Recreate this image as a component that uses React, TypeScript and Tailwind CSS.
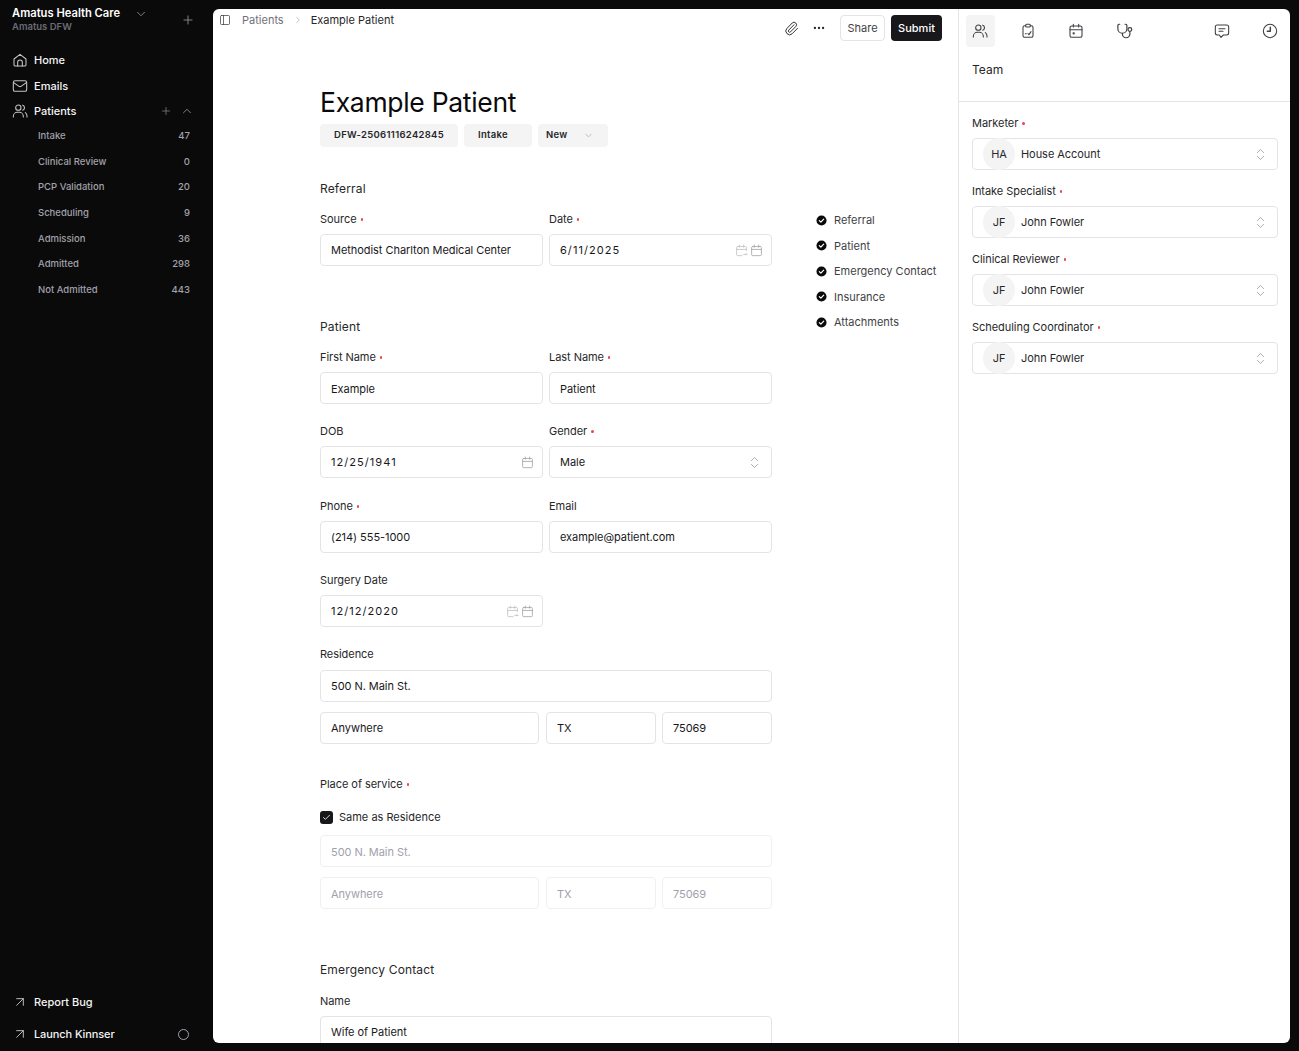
import React from "react";
import { ChevronDown, ChevronUp, ChevronRight, ChevronsUpDown, Plus, ArrowUpRight, Paperclip, MoreHorizontal, PanelLeft, Check } from "lucide-react";

type IP = { className?: string };
const S = ({ className, children }: IP & { children: React.ReactNode }) => (
  <svg viewBox="0 0 24 24" fill="none" stroke="currentColor" strokeWidth="1.6" strokeLinecap="round" strokeLinejoin="round" className={className}>{children}</svg>
);
const HomeI = (p: IP) => <S {...p}><path d="M3 10.5 12 3.5l9 7V19a2 2 0 0 1-2 2H5a2 2 0 0 1-2-2z" /><path d="M8.5 21v-5.5a3.5 3.5 0 0 1 7 0V21" /></S>;
const MailI = (p: IP) => <S {...p}><rect x="2" y="4" width="20" height="16" rx="2.5" /><path d="m2.5 7 8 5.5a2.8 2.8 0 0 0 3 0l8-5.5" /></S>;
const UsersI = (p: IP) => <S {...p}><circle cx="9.5" cy="7" r="4" /><path d="M2 21v-1a6 6 0 0 1 6-6h3a6 6 0 0 1 6 6v1" /><path d="M16 3.2a4 4 0 0 1 0 7.6" /><path d="M20 14.5a6 6 0 0 1 2.5 5V21" /></S>;
const ClipI = (p: IP) => <S {...p}><rect x="8.5" y="2" width="7" height="4" rx="1.5" /><path d="M8.5 4H7a2.5 2.5 0 0 0-2.5 2.5V19A2.5 2.5 0 0 0 7 21.5h10a2.5 2.5 0 0 0 2.5-2.5V6.500A2.500 2.500 0 0 0 17 4h-1.500" /><path d="M8 16h1.500M12 16l1.500 1.500L16.500 13" /></S>;
const CalFillI = (p: IP) => <S {...p}><rect x="3" y="4.500" width="18" height="17" rx="2.500" /><path d="M3 10h18M8 2v4M16 2v4" /><rect x="7" y="14" width="3" height="3" fill="currentColor" stroke="none" /></S>;
const StethI = (p: IP) => <S {...p}><path d="M5 3H4a1.500 1.500 0 0 0-1.500 1.500V9a6 6 0 0 0 12 0V4.500A1.500 1.500 0 0 0 13 3h-1" /><path d="M8.500 15v1a5 5 0 0 0 10 0v-3" /><circle cx="18.500" cy="10" r="2.500" /></S>;
const ChatI = (p: IP) => <S {...p}><path d="M5 3h14a3 3 0 0 1 3 3v9a3 3 0 0 1-3 3h-5l-3.500 3.500L8 18H5a3 3 0 0 1-3-3V6a3 3 0 0 1 3-3z" /><path d="M7.500 8.500h9M7.500 12.500h6" /></S>;
const ClockI = (p: IP) => <S {...p}><circle cx="12" cy="12" r="10" /><path d="M12.500 6.500V12.500H8" strokeWidth="2.200" /></S>;
const CalI = (p: IP) => <S {...p}><rect x="3" y="4.500" width="18" height="17" rx="2" /><path d="M3 10h18M8 2v4M16 2v4" /></S>;
const CalRepeatI = (p: IP) => <S {...p}><path d="M21 12V6.500a2 2 0 0 0-2-2H5a2 2 0 0 0-2 2V19.500a2 2 0 0 0 2 2h8" /><path d="M3 10h18M8 2v4M16 2v4" /><path d="M16 19.500h6M19.500 17l2.500 2.500" /></S>;
const Done = ({ className }: IP) => (
  <svg viewBox="0 0 12 12" className={className}><circle cx="6" cy="6" r="5.500" fill="#0a0a0a" /><path d="m3.600 6.200 1.700 1.600 3.100-3.300" stroke="#fff" strokeWidth="1.300" fill="none" strokeLinecap="round" strokeLinejoin="round" /></svg>
);

const Req = () => <span className="ml-[4px] inline-block w-[2.500px] h-[2.500px] rounded-full bg-[#e5484d] align-middle" />;

const Label = ({ t, req, className = "" }: { t: string; req?: boolean; className?: string }) => (
  <div className={`h-[15px] leading-[15px] text-[11px] text-[#27272a] tracking-[-0.05px] flex items-center ${className}`}>{t}{req && <Req />}</div>
);

const Box = ({ children, className = "", muted }: { children?: React.ReactNode; className?: string; muted?: boolean }) => (
  <div className={`h-[32px] rounded-[4px] border ${muted ? "border-[#f0f0f1] text-[#a1a1aa]" : "border-[#e4e4e7] text-[#18181b]"} flex items-center px-[10px] text-[11px] tracking-[-0.05px] bg-white min-w-0 ${className}`}>{children}</div>
);

const DateBox = ({ v, repeat }: { v: string; repeat?: boolean }) => (
  <Box className="pr-[8px]">
    <span className="flex-1 tracking-[1.05px]">{v}</span>
    {repeat && <CalRepeatI className="w-[13px] h-[13px] text-[#c4c4c8] mr-[2px]" />}
    <CalI className="w-[13px] h-[13px] text-[#a8a8ad]" />
  </Box>
);

const F = ({ label, req, children }: { label: string; req?: boolean; children: React.ReactNode }) => (
  <div className="flex flex-col gap-[7px] min-w-0"><Label t={label} req={req} />{children}</div>
);

const subs: [string, string][] = [["Intake", "47"], ["Clinical Review", "0"], ["PCP Validation", "20"], ["Scheduling", "9"], ["Admission", "36"], ["Admitted", "298"], ["Not Admitted", "443"]];

const NavRow = ({ icon, t, className = "", children }: { icon: React.ReactNode; t: string; className?: string; children?: React.ReactNode }) => (
  <div className={`flex items-center h-[16px] pl-[12px] pr-[20px] text-[11px] font-medium text-[#f4f4f5] ${className}`}>
    <span className="w-[22px] flex">{icon}</span><span className="flex-1">{t}</span>{children}
  </div>
);

const Sidebar = () => (
  <aside className="w-[213px] shrink-0 h-full flex flex-col text-white">
    <div className="flex h-[33px] pt-[7px] pl-[12px] pr-[18px]">
      <div className="flex-1">
        <div className="flex items-center h-[13px] text-[11.200px] font-semibold leading-[13px]">Amatus Health Care<ChevronDown className="w-[14px] h-[14px] ml-[14px] text-[#a1a1aa]" strokeWidth={1.300} /></div>
        <div className="text-[9.500px] h-[12px] leading-[12px] mt-[1px] font-semibold text-[#6b6b73]">Amatus DFW</div>
      </div>
      <Plus className="w-[14px] h-[14px] text-[#8a8a90] mt-[6px]" strokeWidth={1.600} />
    </div>
    <NavRow className="mt-[19px]" t="Home" icon={<HomeI className="w-[16px] h-[16px] text-[#c4c4c8]" />} />
    <NavRow className="mt-[10px]" t="Emails" icon={<MailI className="w-[16px] h-[16px] text-[#c4c4c8]" />} />
    <NavRow className="mt-[9px]" t="Patients" icon={<UsersI className="w-[16px] h-[16px] text-[#c4c4c8]" />}>
      <Plus className="w-[12px] h-[12px] text-[#71717a] mr-[8px]" strokeWidth={1.800} />
      <ChevronUp className="w-[14px] h-[14px] text-[#a1a1aa] -mr-px" strokeWidth={1.300} />
    </NavRow>
    <div className="mt-[4.500px] flex flex-col">
      {subs.map(([n, c]) => (
        <div key={n} className="h-[25.600px] flex items-center justify-between pl-[38px] pr-[23px] text-[9.500px] font-medium text-[#a1a1aa]"><span>{n}</span><span>{c}</span></div>
      ))}
    </div>
    <div className="mt-auto pb-[9px]">
      <NavRow t="Report Bug" icon={<ArrowUpRight className="w-[16px] h-[16px] text-[#d4d4d8]" strokeWidth={1.300} />} />
      <NavRow t="Launch Kinnser" className="mt-[16px] tracking-[-0.1px]" icon={<ArrowUpRight className="w-[16px] h-[16px] text-[#d4d4d8]" strokeWidth={1.300} />}>
        <span className="w-[11px] h-[11px] rounded-full border border-[#a1a1aa] mr-[4px]" />
      </NavRow>
    </div>
  </aside>
);

const Heading = ({ t, className = "" }: { t: string; className?: string }) => (
  <div className={`text-[12px] h-[16px] leading-[16px] text-[#27272a] tracking-[0.15px] ${className}`}>{t}</div>
);

const Form = () => (
  <div className="w-[452px] ml-[107px] shrink-0">
    <h1 className="text-[26.500px] leading-[34px] text-[#0a0a0a] font-normal tracking-[-0.3px] mt-[44px]">Example Patient</h1>
    <div className="flex gap-[6px] mt-[5px] text-[9.500px] font-semibold text-[#27272a] tracking-[0.3px]">
      <div className="h-[23px] w-[138px] rounded-[4px] bg-[#f4f4f5] flex items-center justify-center">DFW-25061116242845</div>
      <div className="h-[23px] w-[68px] rounded-[4px] bg-[#f4f4f5] flex items-center pl-[14px]">Intake</div>
      <div className="h-[23px] w-[70px] rounded-[4px] bg-[#f4f4f5] flex items-center pl-[8px]">New<ChevronDown className="w-[11px] h-[11px] ml-[15px] text-[#a1a1aa]" strokeWidth={1.400} /></div>
    </div>

    <Heading t="Referral" className="mt-[34px]" />
    <div className="grid grid-cols-2 gap-x-[6px] mt-[15px]">
      <F label="Source" req><Box>Methodist Charlton Medical Center</Box></F>
      <F label="Date" req><DateBox v="6/11/2025" repeat /></F>
    </div>

    <Heading t="Patient" className="mt-[53px]" />
    <div className="grid grid-cols-2 gap-x-[6px] mt-[15px]">
      <F label="First Name" req><Box className="pt-[2px]">Example</Box></F>
      <F label="Last Name" req><Box className="pt-[2px]">Patient</Box></F>
    </div>
    <div className="grid grid-cols-2 gap-x-[6px] mt-[20px]">
      <F label="DOB"><DateBox v="12/25/1941" /></F>
      <F label="Gender" req><Box><span className="flex-1">Male</span><ChevronsUpDown className="w-[15px] h-[15px] text-[#8a8a90] -mr-px" strokeWidth={1.100} /></Box></F>
    </div>
    <div className="grid grid-cols-2 gap-x-[6px] mt-[21px]">
      <F label="Phone" req><Box>(214) 555-1000</Box></F>
      <F label="Email"><Box>example@patient.com</Box></F>
    </div>
    <div className="grid grid-cols-2 gap-x-[6px] mt-[20px]">
      <F label="Surgery Date"><DateBox v="12/12/2020" repeat /></F>
    </div>
    <div className="mt-[20px] flex flex-col">
      <Label t="Residence" />
      <Box className="mt-[8px]">500 N. Main St.</Box>
      <div className="flex gap-[6px] mt-[10px]">
        <Box className="w-[219px] mr-[1px]">Anywhere</Box>
        <Box className="w-[110px]">TX</Box>
        <Box className="w-[110px]">75069</Box>
      </div>
    </div>
    <Label t="Place of service" req className="mt-[33px]" />
    <div className="flex items-center mt-[17px] h-[16px] text-[11px] text-[#27272a]">
      <span className="w-[13px] h-[13px] rounded-[3px] bg-[#18181b] flex items-center justify-center mr-[6px]"><Check className="w-[9px] h-[9px] text-white" strokeWidth={2.200} /></span>
      Same as Residence
    </div>
    <Box muted className="mt-[10px] pt-[2px]">500 N. Main St.</Box>
    <div className="flex gap-[6px] mt-[10px]">
      <Box muted className="w-[219px] mr-[1px] pt-[2px]">Anywhere</Box>
      <Box muted className="w-[110px] pt-[2px]">TX</Box>
      <Box muted className="w-[110px] pt-[2px]">75069</Box>
    </div>
    <Heading t="Emergency Contact" className="mt-[53px]" />
    <div className="mt-[16px] flex flex-col gap-[7px]">
      <Label t="Name" />
      <Box>Wife of Patient</Box>
    </div>
  </div>
);

const steps = ["Referral", "Patient", "Emergency Contact", "Insurance", "Attachments"];

const Assign = ({ label, i, name }: { label: string; i: string; name: string }) => (
  <div className="flex flex-col gap-[7px]">
    <Label t={label} req />
    <div className="h-[32px] rounded-[4px] border border-[#e4e4e7] flex items-center pl-[10px] pr-[10px] text-[11px] text-[#27272a] tracking-[-0.05px]">
      <span className="w-[32px] h-[32px] -my-px rounded-full bg-[#f4f4f5] flex items-center justify-center mr-[6px]">{i}</span>
      <span className="flex-1">{name}</span>
      <ChevronsUpDown className="w-[15px] h-[15px] text-[#8a8a90] -mr-px" strokeWidth={1.100} />
    </div>
  </div>
);

const Tab = ({ children, active, className = "" }: { children: React.ReactNode; active?: boolean; className?: string }) => (
  <div className={`w-[29px] h-[32px] rounded-[4px] flex items-center justify-center text-[#3f3f46] ${active ? "bg-[#f4f4f5]" : ""} ${className}`}>{children}</div>
);

export default function App() {
  return (
    <div className="h-screen w-full overflow-hidden bg-[#0a0a0a] flex pt-[9px] pb-[8px] pr-[9px]" style={{ fontFamily: "Inter, 'Liberation Sans', sans-serif" }}>
      <div className="-mt-[9px] -mb-[8px] h-[1051px]"><Sidebar /></div>
      <main className="flex-1 h-full bg-white rounded-[6px] overflow-hidden flex">
        <section className="w-[745px] shrink-0 flex flex-col overflow-hidden">
          <header className="h-[32px] flex items-start pl-[6px] pr-[16px] shrink-0">
            <PanelLeft className="w-[12px] h-[12px] mt-[5px] text-[#3f3f46]" strokeWidth={1.500} />
            <span className="ml-[11px] mt-[4px] text-[11px] leading-[14px] text-[#71717a]">Patients</span>
            <ChevronRight className="w-[10px] h-[10px] ml-[9px] mt-[6px] text-[#a1a1aa]" strokeWidth={1.500} />
            <span className="ml-[8px] mt-[4px] text-[11px] leading-[14px] text-[#27272a]">Example Patient</span>
            <div className="ml-auto flex items-center mt-[6px]">
              <Paperclip className="w-[15px] h-[15px] text-[#27272a] mr-[13px]" strokeWidth={1.500} />
              <MoreHorizontal className="w-[14px] h-[14px] text-[#27272a] mr-[14px]" strokeWidth={2} />
              <div className="h-[26px] w-[45px] rounded-[4px] border border-[#e4e4e7] flex items-center justify-center text-[11px] text-[#3f3f46] mr-[6px]">Share</div>
              <div className="h-[26px] w-[51px] rounded-[4px] bg-[#18181b] flex items-center justify-center text-[11px] font-medium text-white">Submit</div>
            </div>
          </header>
          <div className="flex-1 flex overflow-hidden">
            <Form />
            <nav className="ml-[44px] mt-[166.400px] flex flex-col text-[11px] text-[#3f3f46]">
              {steps.map((s) => (
                <div key={s} className="h-[25.600px] flex items-center gap-[7px] whitespace-nowrap"><Done className="w-[11px] h-[11px]" />{s}</div>
              ))}
            </nav>
          </div>
        </section>
        <aside className="flex-1 border-l border-[#e4e4e7] flex flex-col">
          <div className="flex items-center pt-[6px] pl-[7px] pr-[6px]">
            <Tab active><UsersI className="w-[16px] h-[16px] -translate-x-px" /></Tab>
            <Tab className="ml-[19px]"><ClipI className="w-[16px] h-[16px] -translate-x-px" /></Tab>
            <Tab className="ml-[19px]"><CalFillI className="w-[16px] h-[16px] -translate-x-px" /></Tab>
            <Tab className="ml-[19px]"><StethI className="w-[18px] h-[18px]" /></Tab>
            <Tab className="ml-auto"><ChatI className="w-[16px] h-[16px]" /></Tab>
            <Tab className="ml-[19px]"><ClockI className="w-[16px] h-[16px]" /></Tab>
          </div>
          <div className="h-[55px] border-b border-[#e4e4e7] px-[13px] pt-[15px] text-[12px] leading-[16px] text-[#27272a]">Team</div>
          <div className="px-[13px] pr-[12px] pt-[14px] flex flex-col gap-[14px]">
            <Assign label="Marketer" i="HA" name="House Account" />
            <Assign label="Intake Specialist" i="JF" name="John Fowler" />
            <Assign label="Clinical Reviewer" i="JF" name="John Fowler" />
            <Assign label="Scheduling Coordinator" i="JF" name="John Fowler" />
          </div>
        </aside>
      </main>
    </div>
  );
}
